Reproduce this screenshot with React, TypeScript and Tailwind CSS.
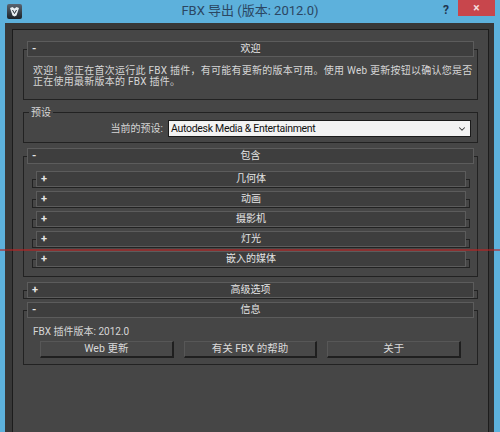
import React from "react";
import { ChevronDown } from "lucide-react";

function RolloutHeader({ label, open }: { label: string; open: boolean }) {
  return (
    <div className="-mt-[9px] mx-[3px] h-[16px] bg-[#3e3e3e] border border-[#5c5c5c] grid grid-cols-[24px_1fr_24px] items-center text-[10px] leading-[14px] text-[#e4e4e4]">
      <span className="pl-[4px] font-bold text-[11px]">{open ? "-" : "+"}</span>
      <span className="text-center">{label}</span>
      <span />
    </div>
  );
}

function Collapsed({ label }: { label: string }) {
  return (
    <div className="pt-[8px]">
      <div className="border border-[#222222] h-[9px]">
        <RolloutHeader label={label} open={false} />
      </div>
    </div>
  );
}

function Btn({ label }: { label: string }) {
  return (
    <div className="h-[17px] bg-[#484848] border-t border-l border-[#575757] border-b-2 border-r-2 border-b-[#1f1f1f] border-r-[#1f1f1f] flex items-center justify-center text-[10.5px] text-[#dadada]">
      {label}
    </div>
  );
}

export default function App() {
  return (
    <div className="w-[500px] h-[432px] bg-[#5db1dc] flex flex-col overflow-hidden relative font-['Roboto','Noto_Sans_CJK_SC',sans-serif]">
      {/* title bar */}
      <div className="h-[23px] flex shrink-0">
        <div className="w-[60px] pl-[7px] pt-[4px]">
          <svg width="15" height="15" viewBox="0 0 15 15">
            <defs>
              <linearGradient id="ic" x1="0" y1="0" x2="0" y2="1">
                <stop offset="0" stopColor="#5a6470" />
                <stop offset="1" stopColor="#1c2228" />
              </linearGradient>
            </defs>
            <rect x="0" y="0" width="15" height="15" rx="2" fill="url(#ic)" />
            <path d="M3 4 L5.5 3 L7.5 4.5 L9.5 3 L12 4 L11 7 L9.5 11.5 L7.5 12.5 L5.5 11.5 L4 7 Z" fill="#e8eef2" />
            <path d="M5.5 6 L7.5 9.5 L9.5 6" stroke="#2a3038" strokeWidth="1" fill="none" />
          </svg>
        </div>
        <div className="flex-1 text-center text-[13px] leading-[22px] text-[#2b4662]">
          FBX 导出 (版本: 2012.0)
        </div>
        <div className="w-[60px] flex items-start">
          <span className="ml-[1px] mt-[3px] w-[10px] text-center text-[12px] font-bold leading-[14px] text-[#1f3550]">?</span>
          <div className="ml-[7px] w-[37px] h-[16px] bg-[#c8464c] flex items-center justify-center text-[#f4dcdc] text-[12px] font-bold leading-none">
            ×
          </div>
        </div>
      </div>

      {/* window frame */}
      <div className="flex-1 ml-[5px] mr-[6px] bg-[#383838] pt-[6px] pl-[7px] pr-[5px] flex flex-col">
        <div className="flex-1 bg-[#464646] border-t border-l border-r border-[#1c1c1c] px-[10px] flex flex-col text-[10px] text-[#d6d6d6]">
          {/* welcome */}
          <div className="pt-[8px] mt-[11px]">
            <div className="border border-[#222222]">
              <RolloutHeader label="欢迎" open />
              <div className="pt-[8px] pb-[12px] pl-[9px] leading-[11px] whitespace-nowrap tracking-[0.25px]">
                <div>欢迎！您正在首次运行此 FBX 插件，有可能有更新的版本可用。使用 Web 更新按钮以确认您是否</div>
                <div>正在使用最新版本的 FBX 插件。</div>
              </div>
            </div>
          </div>

          {/* preset group */}
          <div className="mt-[12px] border border-[#222222] pr-[6px] pb-[5px]">
            <div className="-mt-[7px] mb-[-1px] ml-[5px] px-[2px] w-fit bg-[#464646] leading-[14px]">预设</div>
            <div className="flex justify-end items-center mt-[1px]">
              <span className="mr-[5px] leading-[17px]">当前的预设:</span>
              <div className="w-[303px] h-[17px] bg-[#f2f2f2] border border-[#1a1a1a] flex items-center justify-between pl-[2px] pr-[3px] text-[#111111] text-[10.5px] tracking-[-0.3px]">
                <span>Autodesk Media &amp; Entertainment</span>
                <ChevronDown size={10} strokeWidth={2.5} color="#333333" />
              </div>
            </div>
          </div>

          {/* include */}
          <div className="pt-[8px] mt-[5px]">
            <div className="border border-[#222222]">
              <RolloutHeader label="包含" open />
              <div className="pt-[7px] pb-[8px] pl-[8px] pr-[7px] flex flex-col gap-[3px]">
                <Collapsed label="几何体" />
                <Collapsed label="动画" />
                <Collapsed label="摄影机" />
                <Collapsed label="灯光" />
                <Collapsed label="嵌入的媒体" />
              </div>
            </div>
          </div>

          {/* advanced */}
          <div className="mt-[5px]">
            <Collapsed label="高级选项" />
          </div>

          {/* info */}
          <div className="pt-[8px] mt-[3px]">
            <div className="border border-[#222222]">
              <RolloutHeader label="信息" open />
              <div className="pt-[8px] pl-[9px] leading-[11px]">FBX 插件版本: 2012.0</div>
              <div className="mt-[4px] mb-[6px] px-[16px] grid grid-cols-3 gap-[10px]">
                <Btn label="Web 更新" />
                <Btn label="有关 FBX 的帮助" />
                <Btn label="关于" />
              </div>
            </div>
          </div>
        </div>
      </div>

      {/* stray red guide line across the window */}
      <div className="absolute left-0 right-0 top-[249px] h-[2px] bg-[rgba(185,35,35,0.6)]" />
    </div>
  );
}
